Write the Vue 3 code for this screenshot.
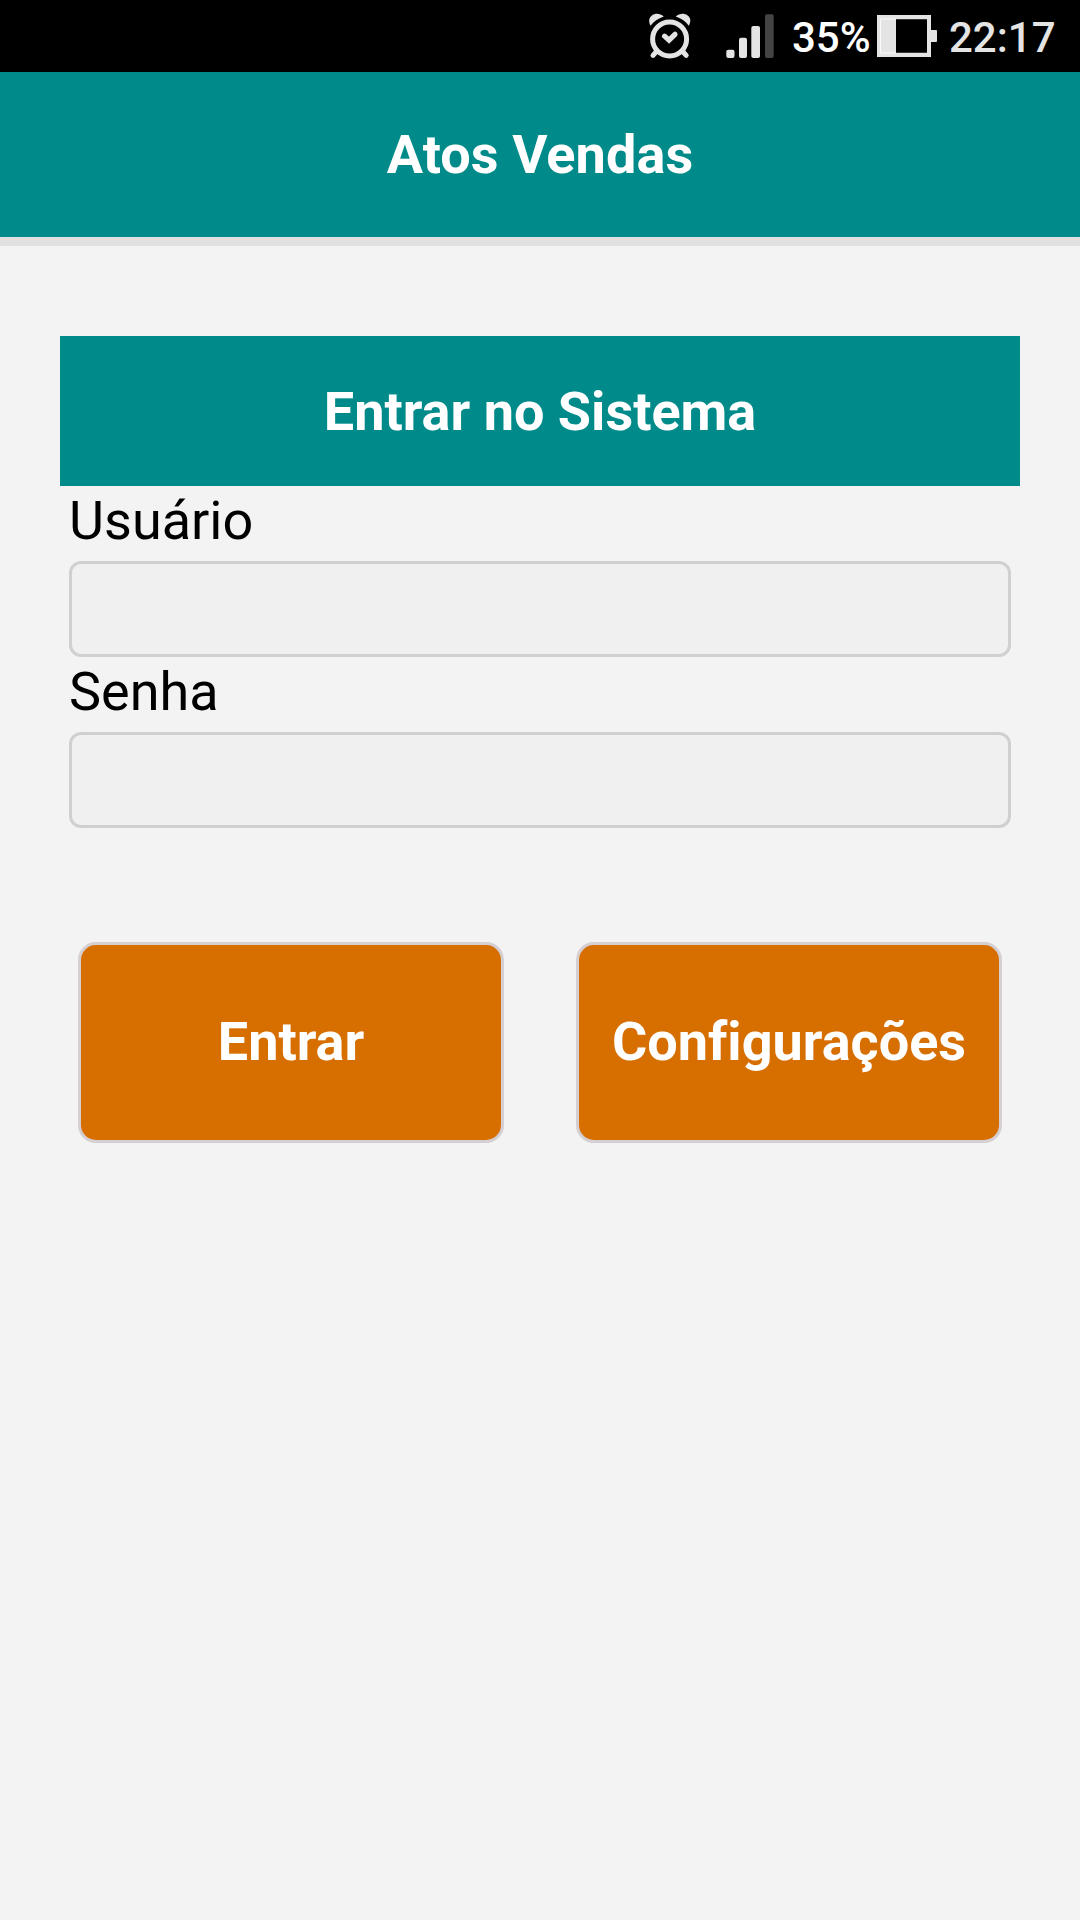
<template>
  <div class="tela">
    <!-- Barra de status -->
    <div class="status">
      <svg class="alarme" width="44" height="48" viewBox="648 12 44 48">
        <g fill="none" stroke="#e4e4e4" stroke-linecap="round">
          <circle cx="669.6" cy="39" r="17" stroke-width="5" />
          <path d="M656.5 51.5L653 55.4M682.7 51.5L686.2 55.4" stroke-width="5" />
          <path d="M664.6 36.2L669 40.2L675 34.3" stroke-width="5.2" />
        </g>
        <path fill="#e4e4e4" d="M650.6 25.8C648 20.5 649.3 17.3 652 15.4C655.5 13 660 13.4 663.8 16.4C658 18.4 653.6 21.2 650.6 25.8Z" />
        <path fill="#e4e4e4" d="M688.8 25.8C691.6 20.5 690.3 17.3 687.6 15.4C684 13 679.4 13.4 675.8 16.4C681.6 18.4 685.8 21.2 688.8 25.8Z" />
      </svg>
      <svg class="sinal" width="48" height="44" viewBox="726 14 48 44">
        <g fill="#e4e4e4">
          <rect x="726.3" y="49.7" width="8.2" height="8.3" rx="2" />
          <rect x="739" y="37.8" width="8" height="20.2" rx="2" />
          <rect x="751.3" y="26" width="8.7" height="32" rx="2" />
        </g>
        <rect x="765" y="14.2" width="8.7" height="43.8" rx="2" fill="#444" />
      </svg>
      <span class="porcento">{{ bateria }}%</span>
      <svg class="bateria" width="60" height="42" viewBox="0 0 60 42">
        <path fill="#e4e4e4" fill-rule="evenodd" d="M0 0H54V15H59Q60 15 60 16V26Q60 27 59 27H54V42H0ZM19 4.3V37.7H50V4.3Z" />
        <path fill="none" stroke="#fff" stroke-width="0.8" d="M19 4H3.5V38H19" />
      </svg>
      <span class="hora">{{ hora }}</span>
    </div>

    <header class="topo">Atos Vendas</header>

    <form class="login" @submit.prevent="entrar">
      <h2 class="titulo">Entrar no Sistema</h2>
      <div class="field">
        <label for="usuario">Usuário</label>
        <input id="usuario" v-model.trim="form.usuario" type="text" />
      </div>
      <div class="field">
        <label for="senha">Senha</label>
        <input id="senha" v-model="form.senha" type="password" />
      </div>
      <div class="botoes">
        <button type="submit" class="btn">Entrar</button>
        <button type="button" class="btn">Configurações</button>
      </div>
    </form>
  </div>
</template>

<script setup>
import { reactive, ref } from 'vue'

const bateria = ref(35)
const hora = ref('22:17')

const form = reactive({
  usuario: '',
  senha: '',
})

function entrar() {
  console.log('Login:', form.usuario)
}
</script>

<style>
body {
  margin: 0;
  background: #f3f3f3;
}
</style>

<style scoped>
.tela {
  min-height: 1920px;
  background: #f3f3f3;
  font-family: Roboto, "Liberation Sans", sans-serif;
  font-size: 54px;
  font-variant-ligatures: none;
  color: #000;
}

/* Barra de status */
.status {
  display: flex;
  box-sizing: border-box;
  height: 72px;
  padding: 0 24px 0 648px;
  background: #000;
  color: #e4e4e4;
  font-size: 42px;
  font-weight: 500;
  line-height: 75px;
  white-space: nowrap;
}

.status svg {
  display: block;
  flex: none;
}

.alarme {
  margin-top: 12px;
}

.sinal {
  margin: 14px 0 0 34px;
}

.porcento {
  width: 85px;
  margin-left: 18px;
  color: #fff;
}

.bateria {
  margin-top: 15px;
}

.hora {
  margin-left: 12px;
}

/* Topo */
.topo {
  height: 165px;
  border-bottom: 9px solid #e0e0e0;
  background: #008b8a;
  color: #fff;
  font-weight: 700;
  letter-spacing: 0.08px;
  line-height: 165px;
  text-align: center;
}

/* Login */
.login {
  padding: 90px 60px 0;
}

.titulo {
  height: 150px;
  margin: 0;
  background: #008b8a;
  color: #fff;
  font-size: 54px;
  font-weight: 700;
  line-height: 152px;
  text-align: center;
}

.field {
  padding: 0 9px;
}

.field label {
  display: block;
  margin-bottom: 6px;
  line-height: 69px;
}

.field input {
  display: block;
  box-sizing: border-box;
  width: 100%;
  height: 96px;
  padding: 0 18px;
  border: 3px solid #d0d0d0;
  border-radius: 12px;
  outline: none;
  background: #f0f0f0;
  font: inherit;
}

/* Botões */
.botoes {
  display: grid;
  grid-template-columns: 1fr 1fr;
  gap: 72px;
  padding: 114px 18px 0;
}

.btn {
  box-sizing: border-box;
  height: 201px;
  padding: 0 0 2px;
  border: 3px solid #d5ced3;
  border-radius: 18px;
  background: #d66e00;
  color: #fff;
  font: inherit;
  font-weight: 700;
  font-variant-ligatures: none;
}
</style>
